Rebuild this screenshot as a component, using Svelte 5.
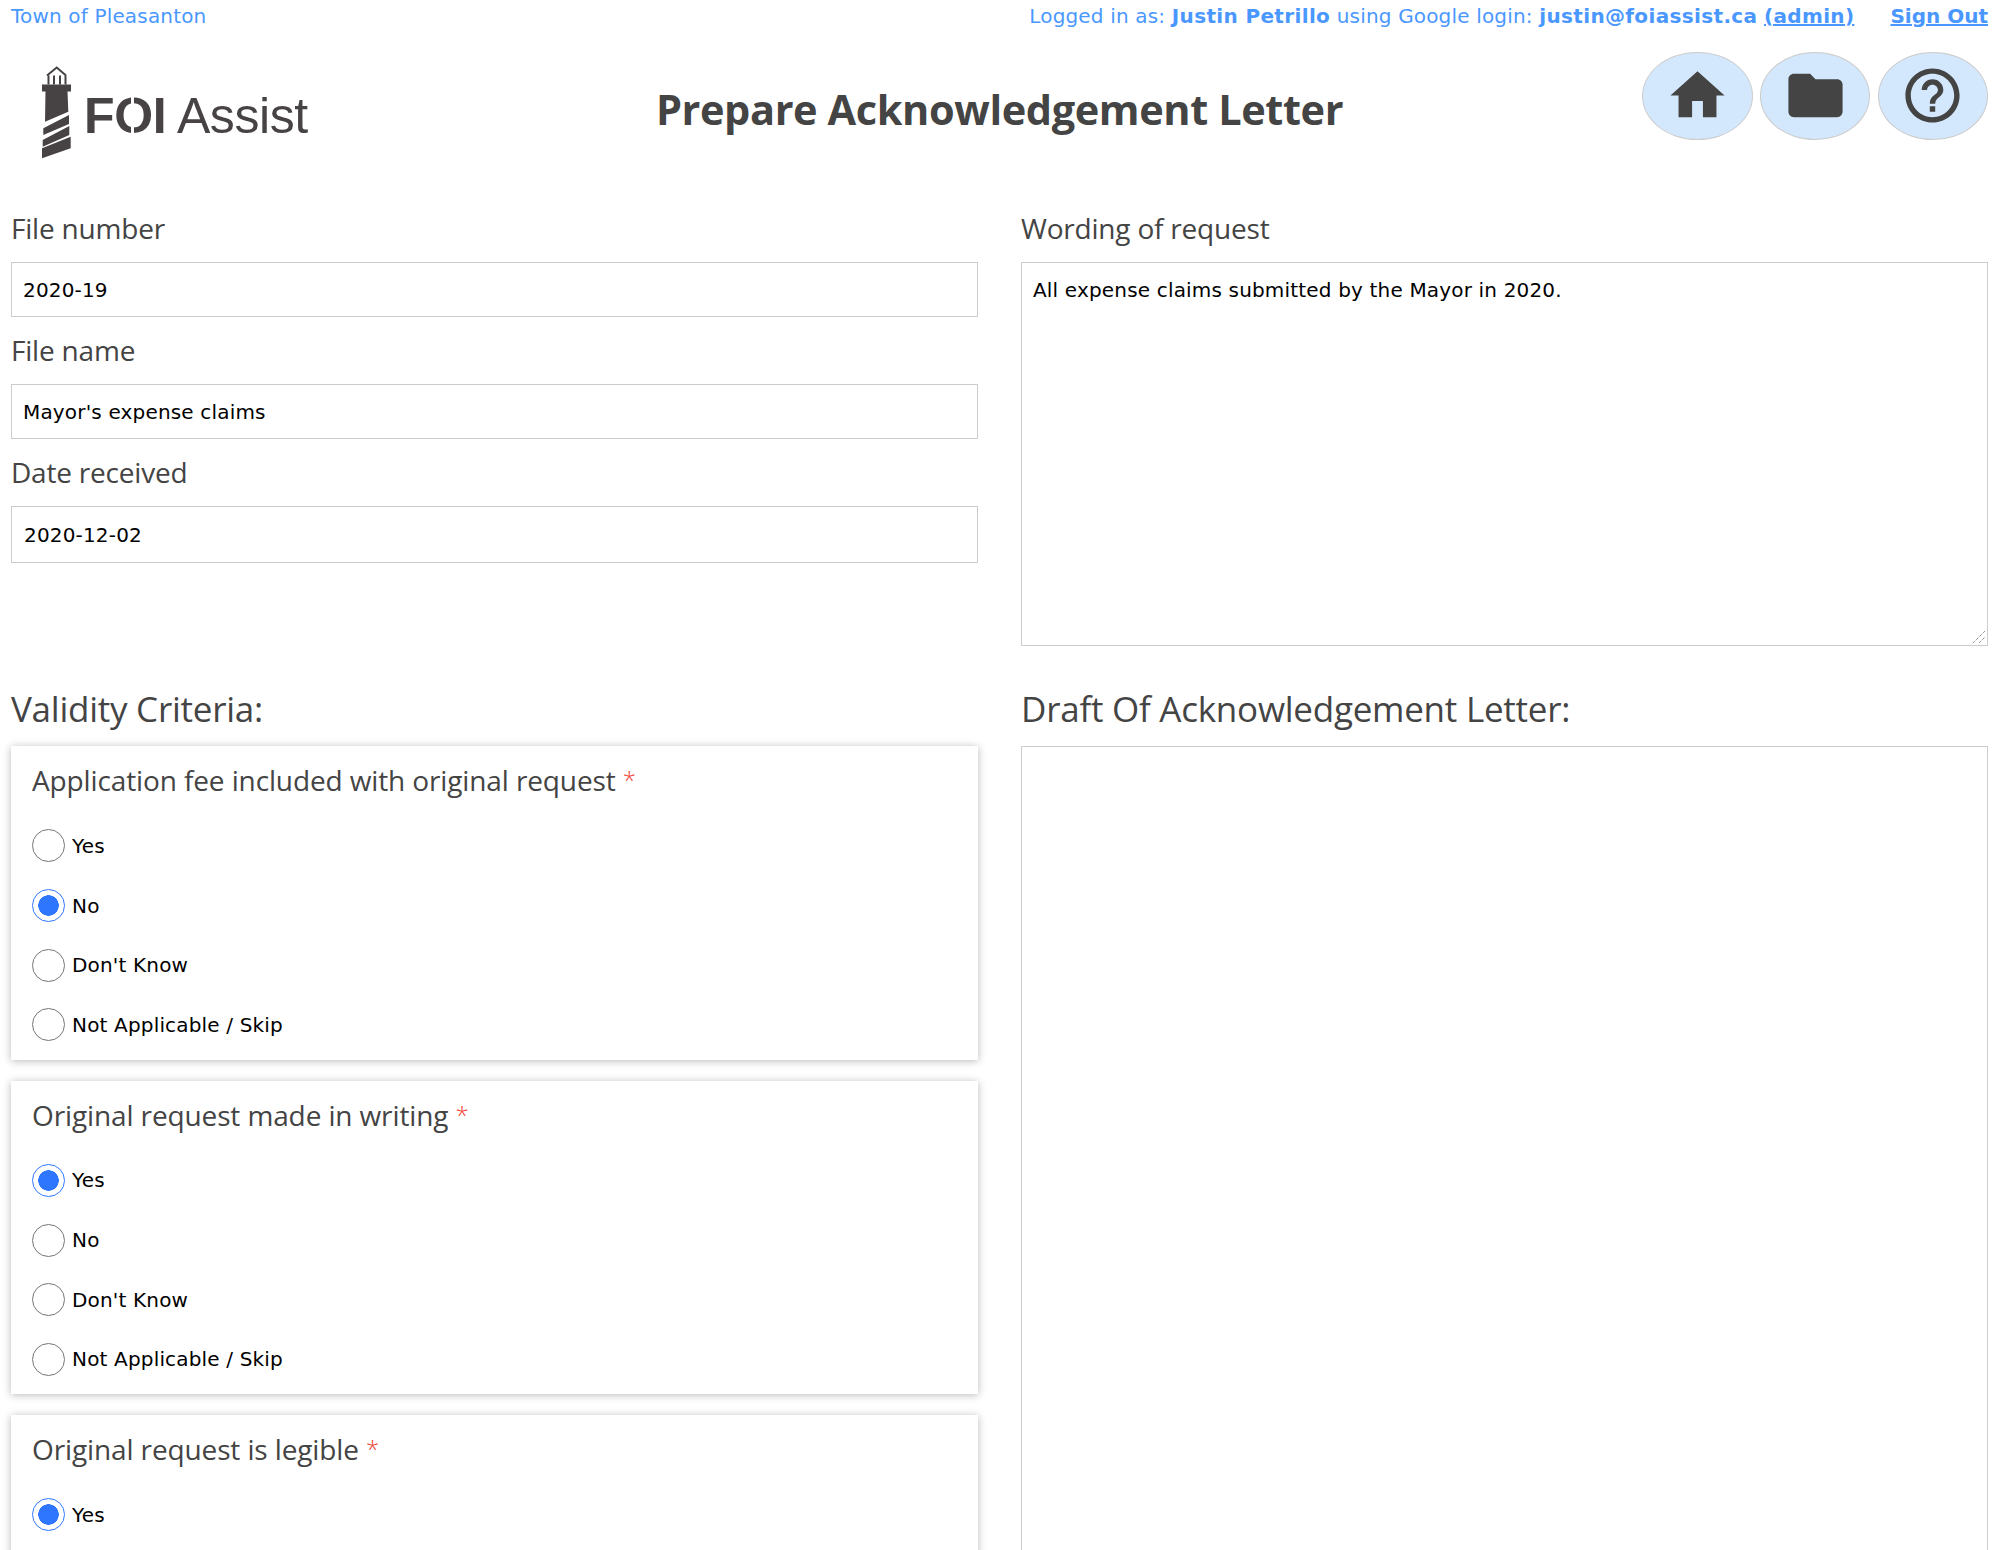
<script lang="ts">
  // only as many options as fit above the fold are listed for the last card
  const criteria = [
    { title: 'Application fee included with original request', value: 'No', shown: 4 },
    { title: 'Original request made in writing', value: 'Yes', shown: 4 },
    { title: 'Original request is legible', value: 'Yes', shown: 1 }
  ];
  const options = ['Yes', 'No', "Don't Know", 'Not Applicable / Skip'];
</script>

<div class="page">
  <div class="topbar">
    <a href="#town">Town of Pleasanton</a>
    <div class="session">
      <span>Logged in as: <b>Justin Petrillo</b> using Google login: <b>justin@foiassist.ca</b> <a class="strong" href="#admin">(admin)</a></span>
      <a class="strong signout" href="#signout">Sign Out</a>
    </div>
  </div>

  <header>
    <div class="logo">
      <svg width="30" height="94" viewBox="0 0 30 94" aria-hidden="true">
        <path d="M5 9.500 14.700 1.500 24 9.500M6.500 9.500v9M12 9.500v9M18 9.500v9M23.500 9.500v9" fill="none" stroke="#474344" stroke-width="2" />
        <path d="M0 18.500h29v7H0z M3.500 25.500h22l.8 20.200L3 55.700z M1.300 62.300 27 49v9L1.300 69z M.7 74 27.300 60v9L.7 80.700z M0 82.300 28.700 70.700v11.600L0 92.300z" fill="#474344" />
      </svg>
      <span class="wordmark"><b>F<span class="stencil">O</span>I</b> Assist</span>
    </div>
    <h1>Prepare Acknowledgement Letter</h1>
    <nav>
      <button aria-label="Home">
        <svg width="65" height="65" viewBox="0 0 24 24"><path d="M10 20v-6h4v6h5v-8h3L12 3 2 12h3v8z" /></svg>
      </button>
      <button aria-label="Files">
        <svg width="65" height="65" viewBox="0 0 24 24"><path d="M10 4H4c-1.100 0-2 .9-2 2v12c0 1.100.9 2 2 2h16c1.100 0 2-.9 2-2V8c0-1.100-.9-2-2-2h-8l-2-2z" /></svg>
      </button>
      <button aria-label="Help">
        <svg width="65" height="65" viewBox="0 0 24 24"><path d="M11 18h2v-2h-2v2zm1-16C6.480 2 2 6.480 2 12s4.480 10 10 10 10-4.480 10-10S17.520 2 12 2zm0 18c-4.410 0-8-3.590-8-8s3.590-8 8-8 8 3.590 8 8-3.590 8-8 8zm0-14c-2.210 0-4 1.790-4 4h2c0-1.100.9-2 2-2s2 .9 2 2c0 2-3 1.750-3 5h2c0-2.250 3-2.500 3-5 0-2.210-1.790-4-4-4z" /></svg>
      </button>
    </nav>
  </header>

  <main>
    <div class="fields">
      <label for="num">File number</label>
      <input id="num" value="2020-19" />
      <label for="name">File name</label>
      <input id="name" value="Mayor's expense claims" />
      <label for="date">Date received</label>
      <input id="date" class="date" value="2020-12-02" />
    </div>
    <div class="fields">
      <label for="wording">Wording of request</label>
      <div class="area">
        <textarea id="wording">All expense claims submitted by the Mayor in 2020.</textarea>
        <svg class="grip" width="14" height="14" viewBox="0 0 14 14" aria-hidden="true">
          <path d="M1 13 13 1M7 13l6-6" fill="none" stroke="#666" stroke-width="1" stroke-dasharray="1 1" />
        </svg>
      </div>
    </div>

    <section>
      <h2>Validity Criteria:</h2>
      {#each criteria as item, i}
        <div class="card">
          <div class="question">{item.title} <span class="req">*</span></div>
          {#each options.slice(0, item.shown) as opt}
            <label class="option">
              <input type="radio" name={'q' + i} checked={opt === item.value} />
              <span>{opt}</span>
            </label>
          {/each}
        </div>
      {/each}
    </section>
    <section>
      <h2>Draft Of Acknowledgement Letter:</h2>
      <div class="draft"></div>
    </section>
  </main>
</div>

<style>
  :global(body) {
    overflow: hidden;
    background: #fff;
  }

  .page {
    height: 1550px;
    overflow: hidden;
    padding: 0 15px 0 11px;
    font-family: 'DejaVu Sans', Verdana, sans-serif;
    font-size: 20px;
    letter-spacing: 0.17px;
    color: #000;
  }

  a {
    color: #4a98ff;
    text-decoration: none;
  }

  .topbar {
    display: flex;
    justify-content: space-between;
    height: 32px;
    line-height: 32px;
    color: #4a98ff;
  }

  .session {
    display: flex;
    gap: 36px;
  }

  .session b,
  .strong {
    letter-spacing: 0.35px;
  }

  .strong {
    font-weight: bold;
    text-decoration: underline;
  }

  .signout {
    letter-spacing: 0;
  }

  header {
    display: grid;
    grid-template-columns: 1fr auto 1fr;
    align-items: start;
    height: 163px;
  }

  .logo {
    display: flex;
    align-items: flex-start;
    gap: 12px;
    padding: 34px 0 0 31px;
  }

  .wordmark {
    font-family: 'Liberation Sans', Arial, sans-serif;
    font-size: 50px;
    line-height: 56px;
    letter-spacing: -0.4px;
    margin-top: 22px;
    color: #474344;
    white-space: nowrap;
  }

  .stencil {
    position: relative;
  }

  .stencil::after {
    content: '';
    position: absolute;
    left: 50%;
    top: 0;
    bottom: 0;
    width: 3px;
    margin-left: -2px;
    background: #fff;
  }

  h1 {
    margin: 49px 0 0;
    font-family: 'Open Sans', sans-serif;
    font-size: 41.500px;
    line-height: 56px;
    letter-spacing: -0.4px;
    font-weight: 700;
    color: #444;
  }

  nav {
    display: flex;
    justify-content: flex-end;
    gap: 7.250px;
    padding-top: 20px;
  }

  nav button {
    display: flex;
    align-items: center;
    justify-content: center;
    width: 110.500px;
    height: 88px;
    padding: 0 0 2px;
    border: 1px solid #ccc;
    border-radius: 50%;
    background: #d4e8fd;
  }

  nav svg {
    fill: #444;
  }

  main {
    display: grid;
    grid-template-columns: 967px 967px;
    column-gap: 43px;
  }

  .fields {
    display: flex;
    flex-direction: column;
    height: 479px;
  }

  .fields label {
    height: 67px;
    line-height: 36px;
    padding-top: 15px;
    box-sizing: border-box;
    font-family: 'Open Sans', sans-serif;
    font-size: 28px;
    letter-spacing: -0.2px;
    color: #444;
  }

  .fields input,
  textarea {
    box-sizing: border-box;
    width: 100%;
    padding: 0 11px;
    border: 1px solid #ccc;
    border-radius: 0;
    font: inherit;
    letter-spacing: 0.17px;
    color: #000;
    outline: none;
  }

  .fields input {
    height: 55px;
    flex: none;
  }

  .fields input.date {
    height: 57px;
    padding-left: 12px;
  }

  .area {
    position: relative;
    height: 384px;
  }

  textarea {
    display: block;
    height: 100%;
    padding-top: 15px;
    line-height: 24px;
    resize: none;
  }

  .grip {
    position: absolute;
    right: 2px;
    bottom: 2px;
  }

  h2 {
    margin: 0;
    height: 72px;
    padding-top: 7px;
    box-sizing: border-box;
    font-family: 'Open Sans', sans-serif;
    font-size: 35px;
    line-height: 56px;
    letter-spacing: -0.25px;
    font-weight: 400;
    color: #444;
  }

  .card {
    padding: 16px 21px 0;
    height: 313.500px;
    box-sizing: border-box;
    margin-bottom: 21px;
    background: #fff;
    box-shadow: 0 1px 8px rgba(0, 0, 0, 0.28);
  }

  .question {
    height: 54px;
    font-family: 'Open Sans', sans-serif;
    font-size: 28px;
    line-height: 36px;
    letter-spacing: -0.12px;
    color: #444;
  }

  .req {
    font-size: 24px;
    font-weight: 300;
    vertical-align: 2px;
    color: #f44336;
  }

  .option {
    display: flex;
    align-items: center;
    gap: 7px;
    height: 59.700px;
  }

  .option input {
    appearance: none;
    flex: none;
    box-sizing: border-box;
    width: 33px;
    height: 33px;
    margin: 0;
    border: 1px solid #767676;
    border-radius: 50%;
    background: #fff;
  }

  .option input:checked {
    border-color: #2f76ff;
    background: radial-gradient(circle, #2f76ff 0 10px, #fff 10.500px);
  }

  .draft {
    height: 900px;
    border: 1px solid #ccc;
  }
</style>
